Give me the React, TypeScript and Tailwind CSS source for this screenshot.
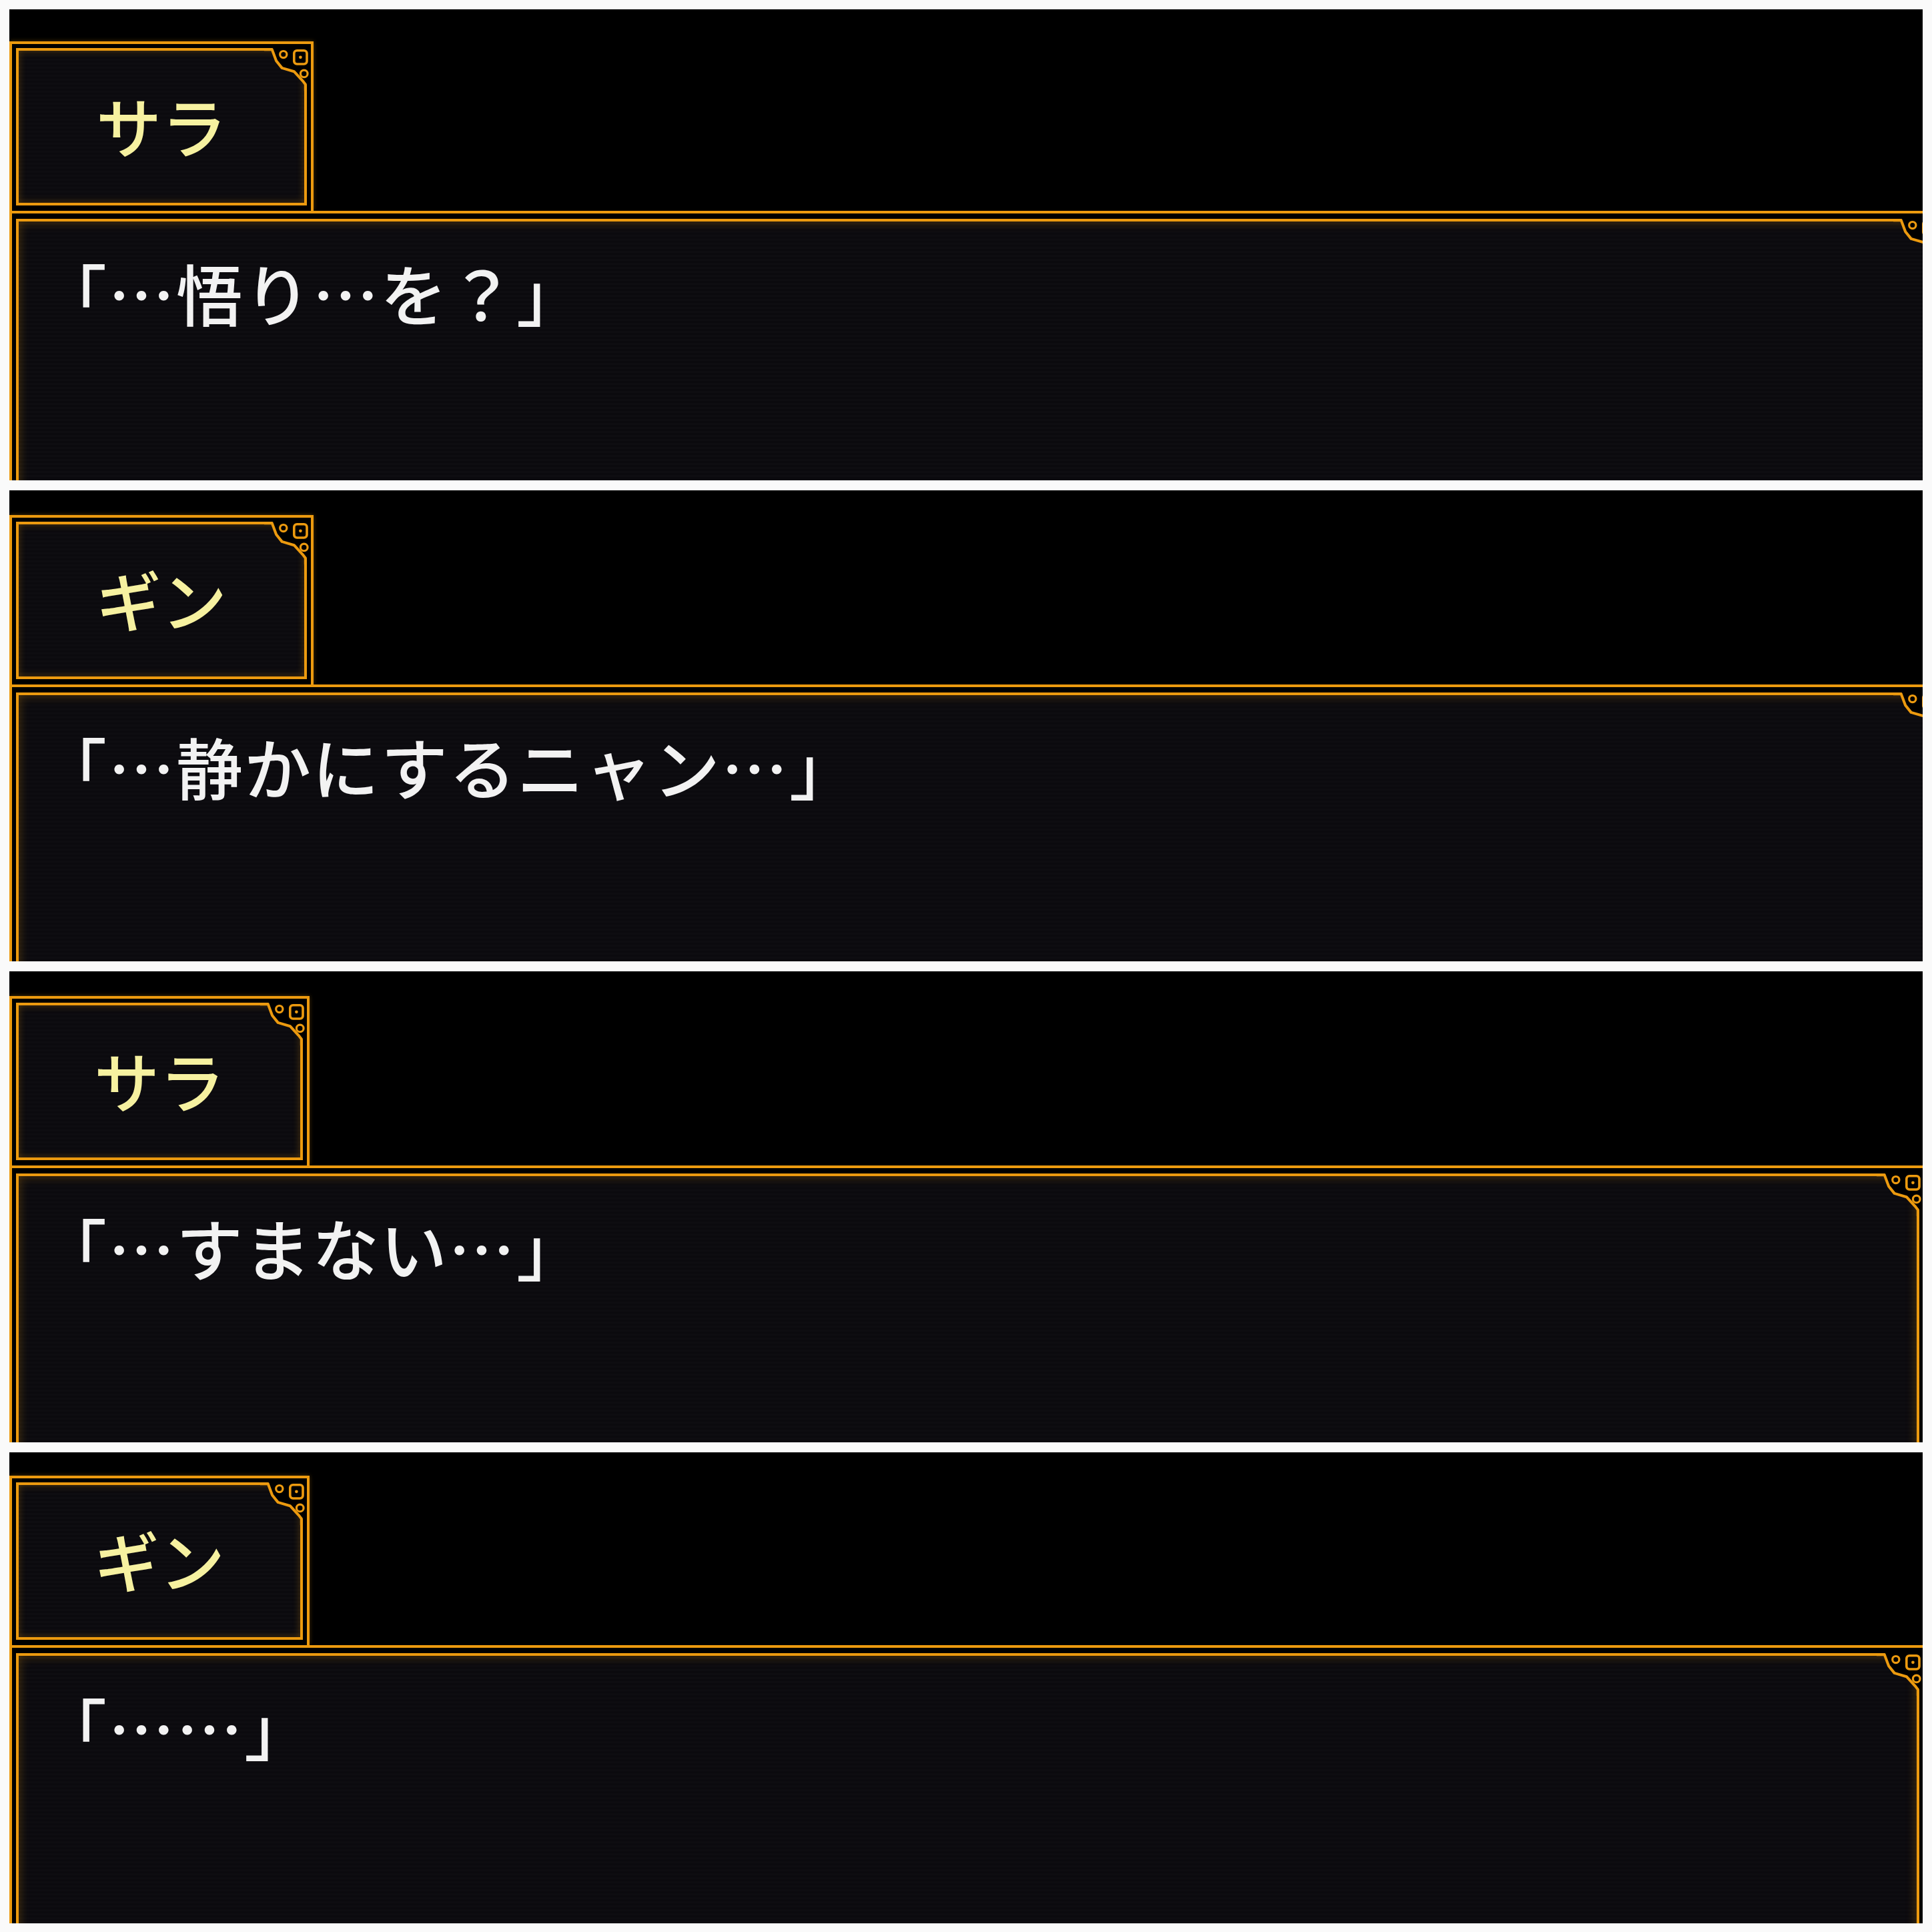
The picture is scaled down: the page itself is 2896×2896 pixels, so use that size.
import React from 'react';

type Line = {
  name: string;
  text: string;
  panelPad: string;
  nameWidth: string;
  boxWidth: string;
};

const lines: Line[] = [
  { name: 'サラ', text: '「…悟り…を？」', panelPad: 'pt-[48px]', nameWidth: 'w-[456px]', boxWidth: 'w-[calc(100%+30px)]' },
  { name: 'ギン', text: '「…静かにするニャン…」', panelPad: 'pt-[37px]', nameWidth: 'w-[456px]', boxWidth: 'w-[calc(100%+30px)]' },
  { name: 'サラ', text: '「…すまない…」', panelPad: 'pt-[37px]', nameWidth: 'w-[450px]', boxWidth: 'w-[calc(100%+5px)]' },
  { name: 'ギン', text: '「……」', panelPad: 'pt-[35px]', nameWidth: 'w-[450px]', boxWidth: 'w-[calc(100%+5px)]' },
];

const gold = '#ec9a0f';

// corner flourish on the top-right of an inner frame
function Corner() {
  return (
    <svg
      className="absolute -top-[4px] -right-[4px] overflow-visible"
      width="64"
      height="64"
      viewBox="0 0 60 60"
    >
      <polygon points="11,-1 61,-1 61,52 58,51 54,46 42,33 25,28 17,18" fill="#000" />
      <path
        d="M0 2 L11 2 L17 18 L25 28 L42 33 L54 46 L58 51 L58 60"
        fill="none"
        stroke={gold}
        strokeWidth="3.8"
        strokeLinejoin="round"
      />
      <circle cx="27" cy="9" r="4.8" fill="none" stroke={gold} strokeWidth="3" />
      <rect x="42" y="3.5" width="18" height="19" rx="4" fill="none" stroke={gold} strokeWidth="3.4" />
      <circle cx="51" cy="13" r="2.2" fill={gold} />
      <circle cx="56" cy="36" r="5" fill="none" stroke={gold} strokeWidth="3" />
    </svg>
  );
}

const frameBg =
  'bg-[repeating-linear-gradient(0deg,#0b0a0e_0px,#0b0a0e_3px,#0e0d11_3px,#0e0d11_6px)]';

function Panel({ line }: { line: Line }) {
  return (
    <div className={`h-[706px] bg-black overflow-hidden flex flex-col ${line.panelPad}`}>
      <div
        className={`${line.nameWidth} h-[254px] shrink-0 border-4 border-b-0 border-[#ec9a0f] pt-[6px] px-[6px] pb-[8px] bg-black shadow-[0_0_6px_rgba(236,154,15,0.35)]`}
      >
        <div
          className={`relative h-full border-4 border-[#ec9a0f] ${frameBg} shadow-[inset_0_0_12px_rgba(236,154,15,0.3)] flex items-center justify-center pb-[8px]`}
        >
          <span className="text-[98px] leading-none font-medium text-[#f6f1a0] font-['Noto_Sans_CJK_JP',sans-serif]">
            {line.name}
          </span>
          <Corner />
        </div>
      </div>
      <div
        className={`${line.boxWidth} h-[470px] shrink-0 border-4 border-[#ec9a0f] pt-[8px] px-[6px] bg-black`}
      >
        <div
          className={`relative h-full border-4 border-[#ec9a0f] ${frameBg} shadow-[inset_0_0_16px_rgba(236,154,15,0.32)] pl-[32px] pt-[56px]`}
        >
          <p className="text-[100px] leading-none font-medium tracking-[2px] text-[#f2f2f2] whitespace-nowrap font-['Noto_Sans_CJK_JP',sans-serif]">
            {line.text}
          </p>
          <Corner />
        </div>
      </div>
    </div>
  );
}

export default function App() {
  return (
    <div className="min-h-screen bg-[#fafafa] p-[14px] flex flex-col gap-[15px]">
      {lines.map((line, i) => (
        <Panel key={i} line={line} />
      ))}
    </div>
  );
}
